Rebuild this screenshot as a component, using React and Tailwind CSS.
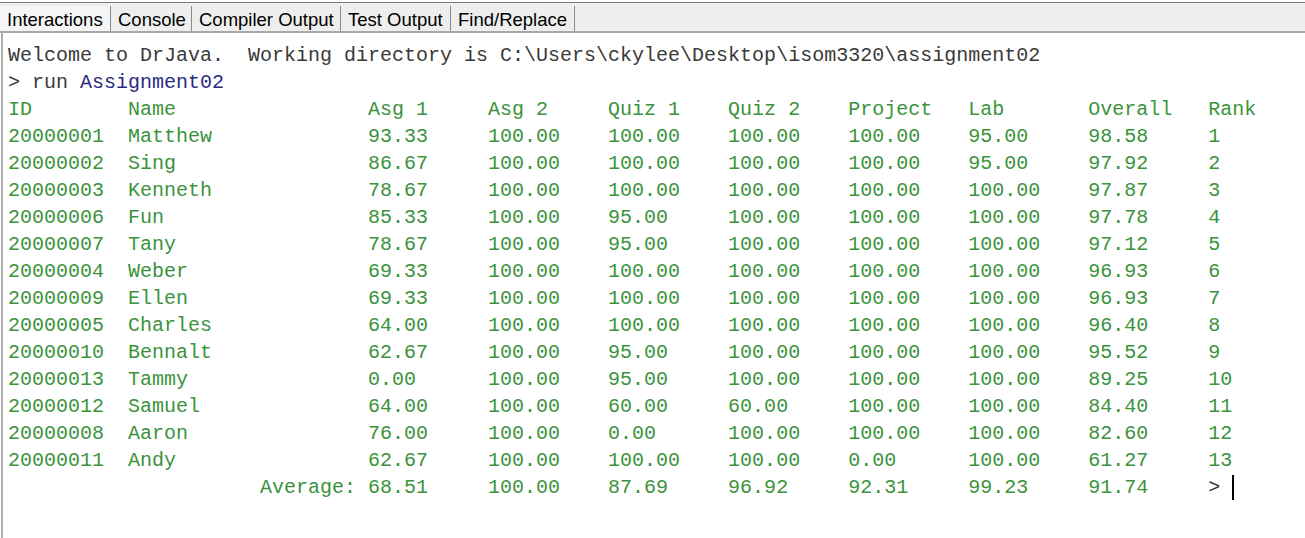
const rows = [
  ['20000001', 'Matthew', '93.33', '100.00', '100.00', '100.00', '100.00', '95.00', '98.58', '1'],
  ['20000002', 'Sing', '86.67', '100.00', '100.00', '100.00', '100.00', '95.00', '97.92', '2'],
  ['20000003', 'Kenneth', '78.67', '100.00', '100.00', '100.00', '100.00', '100.00', '97.87', '3'],
  ['20000006', 'Fun', '85.33', '100.00', '95.00', '100.00', '100.00', '100.00', '97.78', '4'],
  ['20000007', 'Tany', '78.67', '100.00', '95.00', '100.00', '100.00', '100.00', '97.12', '5'],
  ['20000004', 'Weber', '69.33', '100.00', '100.00', '100.00', '100.00', '100.00', '96.93', '6'],
  ['20000009', 'Ellen', '69.33', '100.00', '100.00', '100.00', '100.00', '100.00', '96.93', '7'],
  ['20000005', 'Charles', '64.00', '100.00', '100.00', '100.00', '100.00', '100.00', '96.40', '8'],
  ['20000010', 'Bennalt', '62.67', '100.00', '95.00', '100.00', '100.00', '100.00', '95.52', '9'],
  ['20000013', 'Tammy', '0.00', '100.00', '95.00', '100.00', '100.00', '100.00', '89.25', '10'],
  ['20000012', 'Samuel', '64.00', '100.00', '60.00', '60.00', '100.00', '100.00', '84.40', '11'],
  ['20000008', 'Aaron', '76.00', '100.00', '0.00', '100.00', '100.00', '100.00', '82.60', '12'],
  ['20000011', 'Andy', '62.67', '100.00', '100.00', '100.00', '0.00', '100.00', '61.27', '13'],
];

const header = ['ID', 'Name', 'Asg 1', 'Asg 2', 'Quiz 1', 'Quiz 2', 'Project', 'Lab', 'Overall', 'Rank'];

// tab stops every 10 chars, name column spans two
const fmt = (cols) =>
  cols
    .map((c, i) => (i === cols.length - 1 ? c : c.padEnd(i === 1 ? 20 : 10)))
    .join('');

const avgLine =
  ''.padStart(21) + 'Average: ' +
  ['68.51', '100.00', '87.69', '96.92', '92.31', '99.23', '91.74'].map((v) => v.padEnd(10)).join('');

const tabs = [
  { label: 'Interactions', w: 'w-[111px]', active: true },
  { label: 'Console', w: 'w-[81px]' },
  { label: 'Compiler Output', w: 'w-[149px]' },
  { label: 'Test Output', w: 'w-[110px]' },
  { label: 'Find/Replace', w: 'w-[124px]' },
];

export default function App() {
  return (
    <div className="w-[1305px] h-[538px] bg-white overflow-hidden flex flex-col">
      <div className="h-[2px] bg-white" />
      <div className="h-[1px] bg-[#7a7a7a]" />
      <div className="h-[30px] bg-[#eeeeee] flex items-stretch border-b-2 border-[#a8a8a8] font-['Liberation_Sans',Arial,sans-serif] text-[18.5px] text-black">
        {tabs.map((t) => (
          <div
            key={t.label}
            className={`${t.w} flex items-center pl-[7px] pt-[2px] border-r border-[#8a8a8a] mt-[3px] ${t.active ? 'bg-[#f5f5f5]' : ''}`}
          >
            {t.label}
          </div>
        ))}
      </div>
      <div className="flex-1 border-l-2 border-[#b0b0b0] ml-[1px] pl-[5px] pt-[9px] font-['Liberation_Mono','Courier_New',monospace] text-[20px] leading-[27px] whitespace-pre">
        <div className="text-[#3a3a3a]">
          Welcome to DrJava.  Working directory is C:\Users\ckylee\Desktop\isom3320\assignment02
        </div>
        <div className="text-[#3a3a3a]">
          {'> run '}
          <span className="text-[#2a2a82]">Assignment02</span>
        </div>
        <div className="text-[#3b933b]">{fmt(header)}</div>
        {rows.map((r) => (
          <div key={r[0]} className="text-[#3b933b]">
            {fmt(r)}
          </div>
        ))}
        <div>
          <span className="text-[#3b933b]">{avgLine}</span>
          <span className="text-[#3a3a3a]">{'> '}</span>
          <span className="inline-block w-[2px] h-[25px] bg-black align-middle" />
        </div>
      </div>
    </div>
  );
}
